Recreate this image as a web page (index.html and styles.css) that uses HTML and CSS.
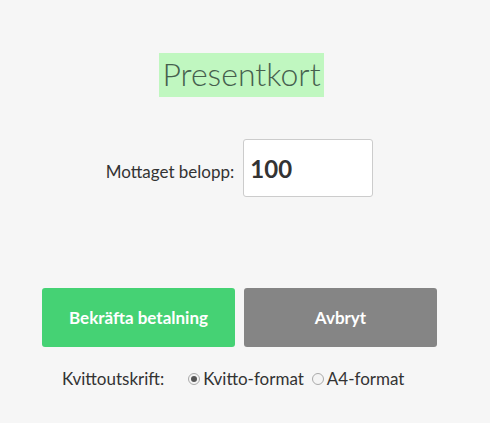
FILE: index.html
```html
<!DOCTYPE html>
<html lang="sv">
<head>
<meta charset="utf-8">
<title>Presentkort</title>
<link rel="stylesheet" href="styles.css">
</head>
<body>
<div class="page">
  <div class="title-row"><h1 class="title">Presentkort</h1></div>
  <div class="amount-row">
    <label class="amount-label" for="amount">Mottaget belopp:</label>
    <input class="amount-input" id="amount" type="text" value="100">
  </div>
  <div class="buttons">
    <button class="btn btn-confirm">Bekräfta betalning</button>
    <button class="btn btn-cancel">Avbryt</button>
  </div>
  <div class="receipt-row">
    <span class="receipt-label">Kvittoutskrift:</span>
    <label class="radio"><span class="dot checked"></span>Kvitto-format</label>
    <label class="radio"><span class="dot"></span>A4-format</label>
  </div>
</div>
</body>
</html>
```
FILE: styles.css
```css
html, body {
  margin: 0;
  padding: 0;
  background: #f6f6f6;
  font-family: Lato, "Open Sans", sans-serif;
  color: #333;
}
.page {
  width: 395px;
  margin-left: 42px;
  padding-top: 53px;
  display: flex;
  flex-direction: column;
}
.title-row {
  display: flex;
  justify-content: center;
  padding-left: 4px;
}
.title {
  margin: 0;
  height: 44px;
  width: 165px;
  box-sizing: border-box;
  background: #c0f7c0;
  font-weight: 300;
  font-size: 32px;
  line-height: 42px;
  text-align: center;
  color: #46604e;
}
.amount-row {
  margin-top: 42px;
  display: flex;
  align-items: center;
  justify-content: center;
  gap: 9px;
}
.amount-label {
  font-size: 17px;
  color: #333;
  padding-top: 6px;
}
.amount-input {
  width: 130px;
  height: 58px;
  box-sizing: border-box;
  border: 1px solid #ccc;
  border-radius: 3px;
  background: #fff;
  padding: 0 0 0 6px;
  font-family: inherit;
  font-size: 24px;
  font-weight: 700;
  color: #333;
  outline: none;
}
.buttons {
  margin-top: 91px;
  display: flex;
  gap: 9px;
}
.btn {
  flex: 1;
  height: 59px;
  border: none;
  border-radius: 3px;
  color: #fff;
  font-family: inherit;
  font-size: 17px;
  font-weight: 700;
  cursor: pointer;
}
.btn-confirm { background: #45d274; }
.btn-cancel { background: #858585; }
.receipt-row {
  margin-top: 21px;
  display: flex;
  align-items: center;
  padding-left: 20px;
  font-size: 17px;
  color: #333;
}
.receipt-label {
  margin-right: 24px;
}
.radio {
  display: flex;
  align-items: center;
  gap: 3px;
  margin-right: 8px;
}
.dot {
  width: 12px;
  height: 12px;
  border-radius: 50%;
  border: 1px solid #aaa;
  background: #f4f4f4;
  box-sizing: border-box;
  position: relative;
}
.dot.checked::after {
  content: "";
  position: absolute;
  left: 2px;
  top: 2px;
  width: 6px;
  height: 6px;
  border-radius: 50%;
  background: #555;
}
```
